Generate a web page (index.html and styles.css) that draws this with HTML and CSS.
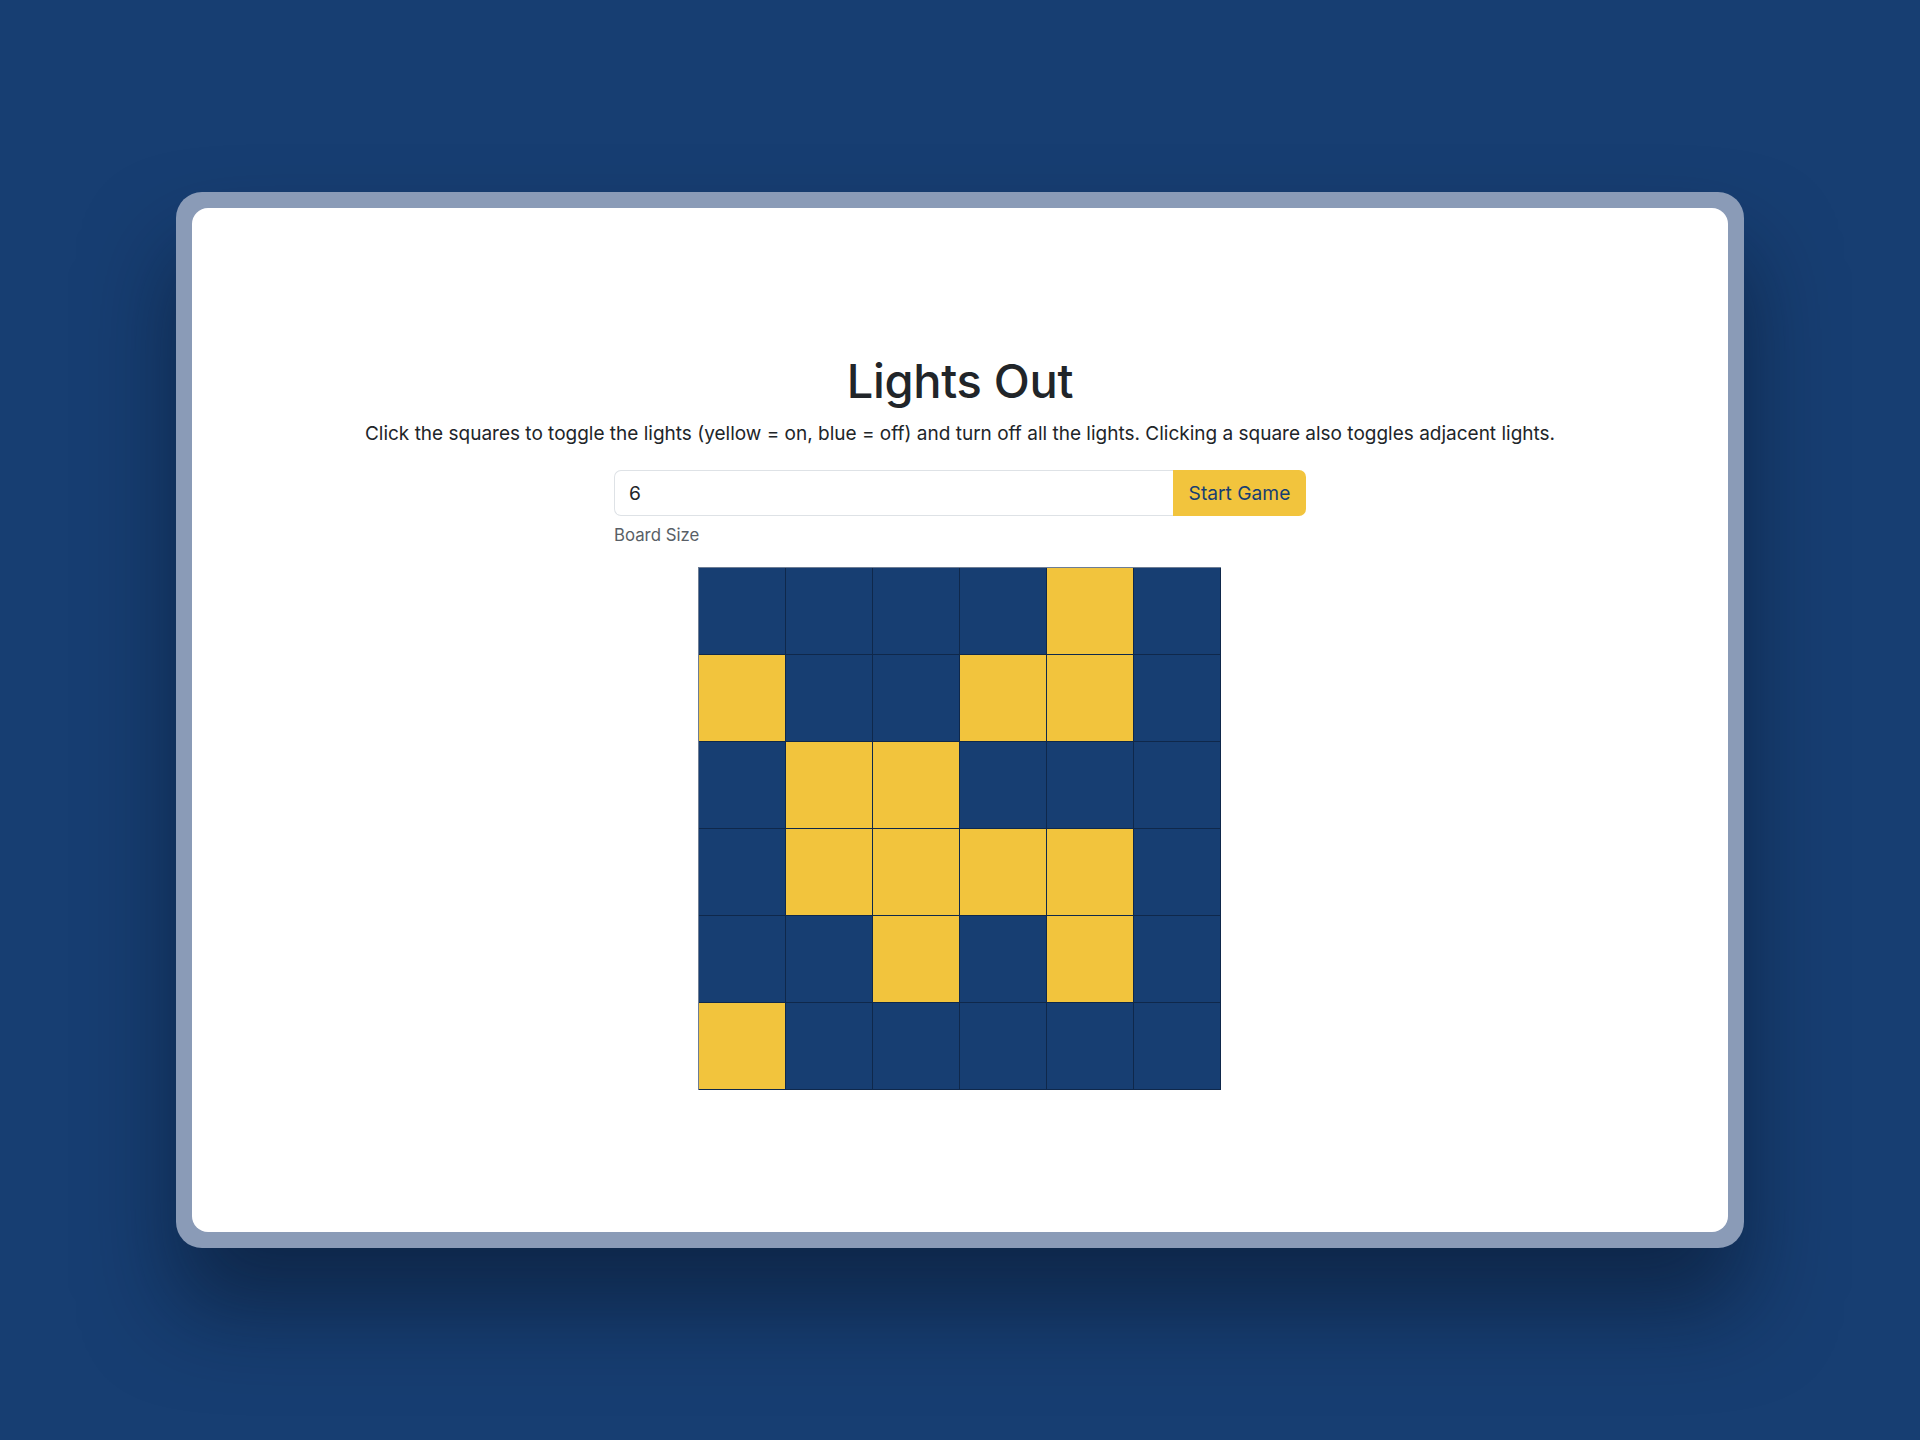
FILE: index.html
```html
<!DOCTYPE html>
<html lang="en">
<head>
<meta charset="utf-8">
<title>Lights Out</title>
<link rel="stylesheet" href="styles.css">
</head>
<body>
<div class="stage">
  <div class="frame">
    <div class="window">
      <main class="game">
        <h1 class="title">Lights Out</h1>
        <p class="desc">Click the squares to toggle the lights (yellow = on, blue = off) and turn off all the lights. Clicking a square also toggles adjacent lights.</p>
        <div class="controls">
          <div class="input-group">
            <input class="size-input" type="text" value="6">
            <button class="start-btn">Start Game</button>
          </div>
          <div class="help">Board Size</div>
        </div>
        <div class="board">
          <div class="cell"></div><div class="cell"></div><div class="cell"></div><div class="cell"></div><div class="cell on"></div><div class="cell"></div>
          <div class="cell on"></div><div class="cell"></div><div class="cell"></div><div class="cell on"></div><div class="cell on"></div><div class="cell"></div>
          <div class="cell"></div><div class="cell on"></div><div class="cell on"></div><div class="cell"></div><div class="cell"></div><div class="cell"></div>
          <div class="cell"></div><div class="cell on"></div><div class="cell on"></div><div class="cell on"></div><div class="cell on"></div><div class="cell"></div>
          <div class="cell"></div><div class="cell"></div><div class="cell on"></div><div class="cell"></div><div class="cell on"></div><div class="cell"></div>
          <div class="cell on"></div><div class="cell"></div><div class="cell"></div><div class="cell"></div><div class="cell"></div><div class="cell"></div>
        </div>
      </main>
    </div>
  </div>
</div>
</body>
</html>
```

FILE: styles.css
```css
* { box-sizing: border-box; }
html, body { margin: 0; padding: 0; }
body {
  width: 1920px;
  height: 1440px;
  background: #173e72;
  font-family: Inter, "Liberation Sans", Arial, sans-serif;
  color: #212529;
  overflow: hidden;
}
.stage {
  width: 1920px;
  height: 1440px;
  display: flex;
  align-items: flex-start;
  justify-content: center;
  padding-top: 192px;
}
.frame {
  width: 1568px;
  height: 1056px;
  border-radius: 26px;
  padding: 16px;
  background: #8a9bb7;
  box-shadow: 0 60px 90px rgba(8, 20, 40, 0.55);
}
.window {
  width: 100%;
  height: 100%;
  background: #fff;
  border-radius: 16px;
  display: flex;
  align-items: center;
  justify-content: center;
}
.game {
  display: flex;
  flex-direction: column;
  align-items: center;
  margin-top: 2px;
}
.title {
  margin: 0 0 9px;
  font-size: 47px;
  font-weight: 500;
  line-height: 58px;
  letter-spacing: -0.3px;
  color: #212529;
}
.desc {
  margin: 0 0 22px;
  font-size: 19px;
  line-height: 29px;
  color: #212529;
}
.controls {
  width: 692px;
}
.input-group {
  display: flex;
  height: 46px;
}
.size-input {
  flex: 1;
  min-width: 0;
  border: 1px solid #dee2e6;
  border-right: none;
  border-radius: 7px 0 0 7px;
  padding: 0 14px;
  font-family: inherit;
  font-size: 19.2px;
  color: #212529;
  background: #fff;
  outline: none;
}
.start-btn {
  width: 133px;
  border: none;
  border-radius: 0 7px 7px 0;
  background: #f2c43d;
  color: #173e72;
  font-family: inherit;
  font-size: 19.2px;
  padding: 0;
}
.help {
  margin-top: 7px;
  font-size: 16.8px;
  line-height: 25px;
  color: #595f66;
}
.board {
  margin-top: 19px;
  display: grid;
  grid-template-columns: repeat(6, 87px);
  grid-template-rows: repeat(6, 87px);
  border-top: 1px solid #6d7d94;
  border-left: 1px solid #6d7d94;
}
.cell {
  background: #173e72;
  border-right: 1px solid #0f284b;
  border-bottom: 1px solid #0f284b;
}
.cell.on {
  background: #f2c43d;
}
```
